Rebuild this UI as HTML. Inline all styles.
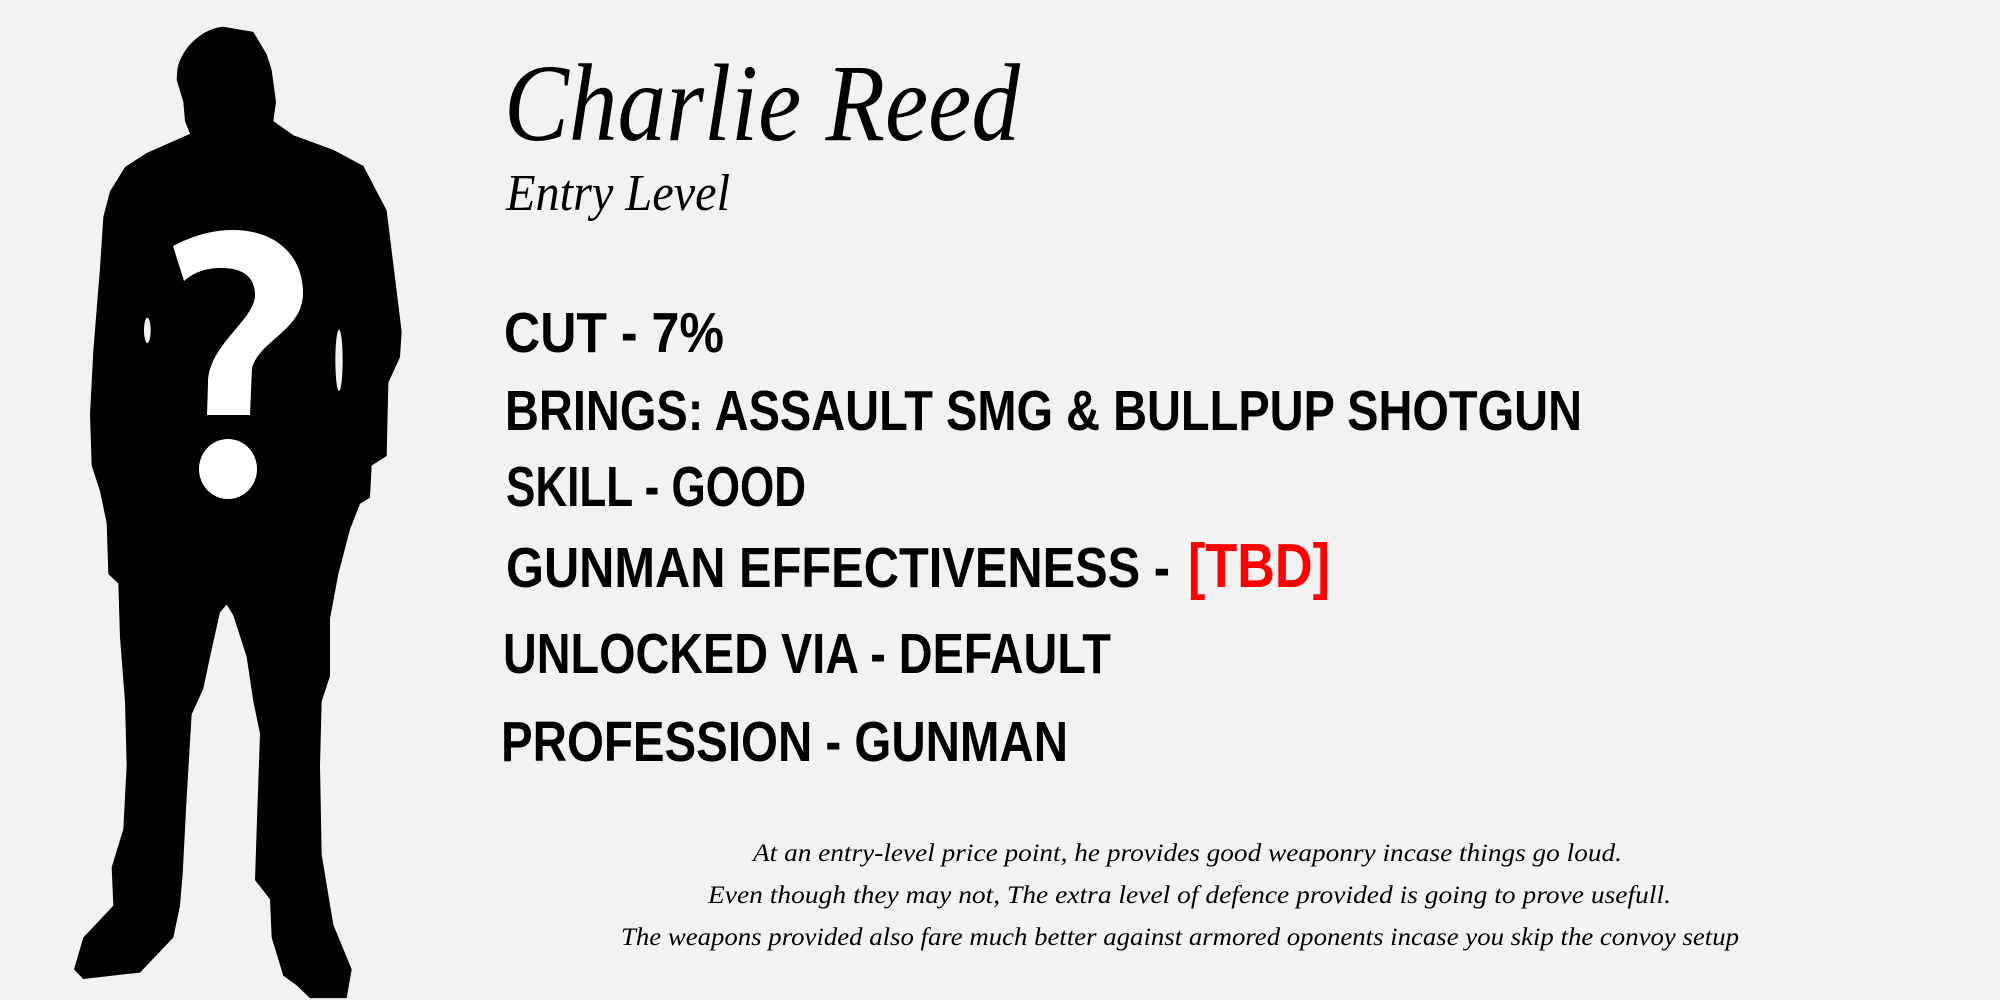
<!DOCTYPE html>
<html><head><meta charset="utf-8"><style>
html,body{margin:0;padding:0;background:#f2f2f2;width:2000px;height:1000px;overflow:hidden}
svg{position:absolute;left:0;top:0}
</style></head><body>
<svg width="500" height="1000" viewBox="0 0 1500 1568" preserveAspectRatio="none">
<path fill="#000" d="M670,42 C600,45 540,80 532,110 L530,125 L550,160 L555,190 L570,210 L440,240 L375,262 L330,300 L310,340 L300,420 L280,550 L270,650 L275,730 L300,770 L320,820 L325,900 L355,915 L360,1000 L375,1100 L380,1200 L370,1300 L335,1360 L340,1420 L250,1470 L222,1520 L250,1535 L420,1525 L520,1470 L540,1420 L548,1370 L560,1250 L575,1120 L610,1080 L630,1030 L660,960 L680,948 L700,965 L740,1030 L760,1100 L780,1150 L770,1300 L765,1380 L810,1410 L815,1470 L850,1530 L890,1545 L930,1565 L1040,1565 L1055,1520 L1000,1450 L965,1340 L960,1200 L965,1100 L990,1060 L990,970 L1015,900 L1050,830 L1080,790 L1110,780 L1115,730 L1160,715 L1165,600 L1200,560 L1205,520 L1160,330 L1140,310 L1090,260 L1000,235 L880,212 L820,190 L828,160 L815,110 L800,85 L760,50 Z"/>
<ellipse cx="442" cy="518" rx="10" ry="20" fill="#f2f2f2"/>
<ellipse cx="1017" cy="565" rx="11" ry="48" fill="#f2f2f2"/>
</svg>
<svg width="2000" height="1000" viewBox="0 0 2000 1000">
<path fill="#fff" d="M173,246 C200,232 220,230 233,230 C275,230 303,255 303,293 C303,330 260,340 252,368 L250,415 L207,415 L208,383 C208,345 255,320 255,295 C255,275 240,268 222,268 C205,268 195,272 184,281 Z"/>
<ellipse cx="228" cy="469" rx="29" ry="30" fill="#fff"/>
<g font-family="Liberation Serif" font-style="italic" fill="#000">
<text x="504" y="140" textLength="516" lengthAdjust="spacingAndGlyphs" font-size="110">Charlie Reed</text>
<text x="506" y="210" textLength="224" lengthAdjust="spacingAndGlyphs" font-size="52">Entry Level</text>
</g>
<g font-family="Liberation Sans" font-weight="bold" font-size="57" fill="#000">
<text x="504" y="352" textLength="220" lengthAdjust="spacingAndGlyphs">CUT - 7%</text>
<text x="505" y="430" textLength="1077" lengthAdjust="spacingAndGlyphs">BRINGS: ASSAULT SMG &amp; BULLPUP SHOTGUN</text>
<text x="506" y="506" textLength="300" lengthAdjust="spacingAndGlyphs">SKILL - GOOD</text>
<text x="506" y="587" textLength="664" lengthAdjust="spacingAndGlyphs">GUNMAN EFFECTIVENESS -</text>
<text x="1188" y="587" textLength="142" lengthAdjust="spacingAndGlyphs" fill="#ff0000" font-size="62">[TBD]</text>
<text x="503" y="673" textLength="608" lengthAdjust="spacingAndGlyphs">UNLOCKED VIA - DEFAULT</text>
<text x="501" y="761" textLength="567" lengthAdjust="spacingAndGlyphs">PROFESSION - GUNMAN</text>
</g>
<g font-family="Liberation Serif" font-style="italic" font-size="25" fill="#000">
<text x="753" y="861" textLength="869" lengthAdjust="spacingAndGlyphs">At an entry-level price point, he provides good weaponry incase things go loud.</text>
<text x="708" y="903" textLength="963" lengthAdjust="spacingAndGlyphs">Even though they may not, The extra level of defence provided is going to prove usefull.</text>
<text x="621" y="945" textLength="1118" lengthAdjust="spacingAndGlyphs">The weapons provided also fare much better against armored oponents incase you skip the convoy setup</text>
</g>
</svg>
</body></html>
